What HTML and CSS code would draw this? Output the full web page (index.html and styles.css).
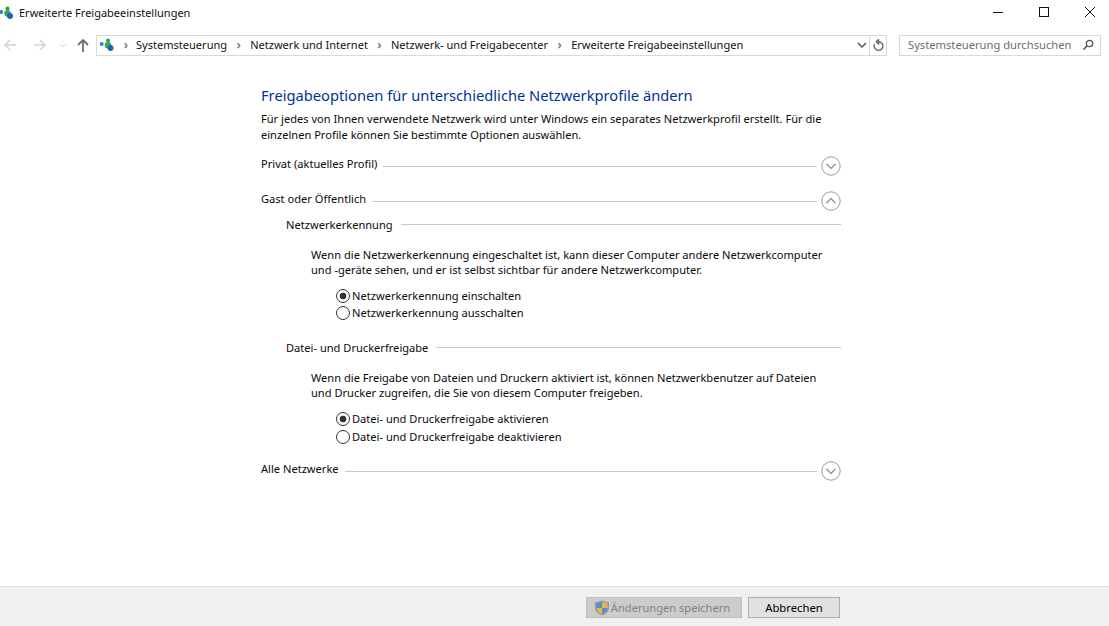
FILE: index.html
```html
<!DOCTYPE html>
<html lang="de">
<head>
<meta charset="utf-8">
<title>Erweiterte Freigabeeinstellungen</title>
<link rel="stylesheet" href="styles.css">
</head>
<body>
<div class="window">
  <header class="titlebar">
    <svg class="net-icon" viewBox="0 0 16 14"><circle cx="2.2" cy="6" r="2" fill="#1a8fc4"/><circle cx="8.500" cy="2.5" r="2" fill="#2f9e44"/><circle cx="8.500" cy="7.200" r="3.200" fill="#3aa655"/><circle cx="11" cy="10" r="3" fill="#1565c0"/></svg>
    <span class="title">Erweiterte Freigabeeinstellungen</span>
    <div class="controls">
      <svg class="ctl" viewBox="0 0 12 12"><path d="M1 6.5h10" stroke="#111" fill="none"/></svg>
      <svg class="ctl" viewBox="0 0 12 12"><rect x="1.5" y="1.5" width="9" height="9" stroke="#111" fill="none"/></svg>
      <svg class="ctl" viewBox="0 0 12 12"><path d="M1 1l10 10M11 1L1 11" stroke="#111" fill="none"/></svg>
    </div>
  </header>
  <nav class="navbar">
    <svg class="nav-btn back" viewBox="0 0 14 14"><path d="M13 7H2M7 2L2 7l5 5" stroke="#d4d4d4" stroke-width="1.6" fill="none"/></svg>
    <svg class="nav-btn fwd" viewBox="0 0 14 14"><path d="M1 7h11M7 2l5 5-5 5" stroke="#d4d4d4" stroke-width="1.6" fill="none"/></svg>
    <svg class="nav-drop" viewBox="0 0 8 5"><path d="M1 1l3 3 3-3" stroke="#d4d4d4" fill="none"/></svg>
    <svg class="nav-btn up" viewBox="0 0 14 14"><path d="M7 14V2M2 7l5-5 5 5" stroke="#6d6d6d" stroke-width="1.8" fill="none"/></svg>
    <div class="address">
      <svg class="net-icon" viewBox="0 0 16 14"><circle cx="2.2" cy="6" r="2" fill="#1a8fc4"/><circle cx="8.500" cy="2.5" r="2" fill="#2f9e44"/><circle cx="8.500" cy="7.200" r="3.200" fill="#3aa655"/><circle cx="11" cy="10" r="3" fill="#1565c0"/></svg>
      <span class="crumb-sep first">›</span><span class="crumb">Systemsteuerung</span>
      <span class="crumb-sep">›</span><span class="crumb">Netzwerk und Internet</span>
      <span class="crumb-sep">›</span><span class="crumb">Netzwerk- und Freigabecenter</span>
      <span class="crumb-sep">›</span><span class="crumb">Erweiterte Freigabeeinstellungen</span>
      <svg class="addr-drop" viewBox="0 0 10 6"><path d="M1 1l4 4 4-4" stroke="#555" stroke-width="1.5" fill="none"/></svg>
      <div class="refresh">
        <svg viewBox="0 0 12 12"><path d="M6 2.5a4 4 0 1 1-3.6 2.3M6 .5v4L4 2.5z" stroke="#666" stroke-width="1.3" fill="none"/></svg>
      </div>
    </div>
    <div class="search">
      <span>Systemsteuerung durchsuchen</span>
      <svg viewBox="0 0 12 12"><circle cx="7.5" cy="4.5" r="3.2" stroke="#555" stroke-width="1.3" fill="none"/><path d="M5 7l-3.5 3.5" stroke="#555" stroke-width="1.6" fill="none"/></svg>
    </div>
  </nav>
  <main class="content">
    <h1>Freigabeoptionen für unterschiedliche Netzwerkprofile ändern</h1>
    <p class="intro">Für jedes von Ihnen verwendete Netzwerk wird unter Windows ein separates Netzwerkprofil erstellt. Für die einzelnen Profile können Sie bestimmte Optionen auswählen.</p>

    <div class="profile privat"><span>Privat (aktuelles Profil)</span><i class="rule"></i>
      <svg class="chev" viewBox="0 0 20 20"><circle cx="10" cy="10" r="9.2" stroke="#9a9a9a" fill="none"/><path d="M5.5 8l4.5 4.5L14.500 8" stroke="#8a8a8a" stroke-width="1.2" fill="none"/></svg></div>
    <div class="profile gast"><span>Gast oder Öffentlich</span><i class="rule"></i>
      <svg class="chev" viewBox="0 0 20 20"><circle cx="10" cy="10" r="9.2" stroke="#9a9a9a" fill="none"/><path d="M5.500 12L10 7.500l4.500 4.500" stroke="#8a8a8a" stroke-width="1.2" fill="none"/></svg></div>

    <section class="group">
      <div class="group-head"><span>Netzwerkerkennung</span><i class="rule"></i></div>
      <p class="desc">Wenn die Netzwerkerkennung eingeschaltet ist, kann dieser Computer andere Netzwerkcomputer und -geräte sehen, und er ist selbst sichtbar für andere Netzwerkcomputer.</p>
      <div class="radios tight">
        <label class="radio on">Netzwerkerkennung einschalten</label>
        <label class="radio">Netzwerkerkennung ausschalten</label>
      </div>
    </section>

    <section class="group second">
      <div class="group-head"><span>Datei- und Druckerfreigabe</span><i class="rule"></i></div>
      <p class="desc">Wenn die Freigabe von Dateien und Druckern aktiviert ist, können Netzwerkbenutzer auf Dateien und Drucker zugreifen, die Sie von diesem Computer freigeben.</p>
      <div class="radios">
        <label class="radio on">Datei- und Druckerfreigabe aktivieren</label>
        <label class="radio">Datei- und Druckerfreigabe deaktivieren</label>
      </div>
    </section>

    <div class="profile alle"><span>Alle Netzwerke</span><i class="rule"></i>
      <svg class="chev" viewBox="0 0 20 20"><circle cx="10" cy="10" r="9.2" stroke="#9a9a9a" fill="none"/><path d="M5.500 8l4.500 4.500L14.500 8" stroke="#8a8a8a" stroke-width="1.2" fill="none"/></svg></div>
  </main>
  <footer class="footer">
    <button class="btn save" disabled>
      <svg viewBox="0 0 16 16"><path d="M8 .5l7 2v5c0 4-3 6.500-7 8-4-1.500-7-4-7-8v-5z" fill="#8c9aa8"/><path d="M8 2l5.500 1.600V8H8z" fill="#e3b94f"/><path d="M8 8h-5.500c.3 3 2.500 5 5.500 6.200z" fill="#e3b94f"/><path d="M8 2L2.500 3.600V8H8z" fill="#5a90c8"/><path d="M8 8h5.500c-.3 3-2.500 5-5.500 6.200z" fill="#5a90c8"/></svg>
      <span>Änderungen speichern</span>
    </button>
    <button class="btn cancel">Abbrechen</button>
  </footer>
</div>
</body>
</html>
```
FILE: styles.css
```css
* { box-sizing: border-box; }
html, body { margin: 0; padding: 0; }
body { width: 1109px; height: 626px; overflow: hidden; background: #fff; color: #0a0a0a;
  font: 11.1px/16px "Noto Sans", "Open Sans", sans-serif; }
.window { width: 1109px; height: 626px; display: flex; flex-direction: column; }

.titlebar { height: 30px; flex: none; display: flex; align-items: center; }
.titlebar .net-icon { width: 16px; height: 14px; margin-left: -1px; margin-top: -5px; }
.title { margin-left: 4px; margin-top: -5px; font-size: 11px; color: #111; }
.controls { margin-left: auto; display: flex; margin-top: -6px; margin-right: 13px; gap: 34px; }
.ctl { width: 12px; height: 12px; display: block; }

.navbar { height: 26px; flex: none; display: flex; align-items: center; position: relative; margin-top: 2px; }
.nav-btn { width: 14px; height: 14px; flex: none; }
.back { margin-left: 3px; }
.fwd { margin-left: 16px; }
.nav-drop { width: 8px; height: 5px; margin-left: 12px; }
.up { margin-left: 9px; }
.address { margin-left: 6px; width: 791px; height: 21px; border: 1px solid #d9d9d9; display: flex; align-items: center; flex: none; }
.address .net-icon { width: 17px; height: 14px; margin-left: 2px; flex: none; }
.crumb-sep { color: #808080; font-size: 12px; font-weight: 700; width: 23px; text-align: center; flex: none; }
.crumb-sep.first { width: 20px; }
.crumb { color: #111; white-space: nowrap; font-size: 11.05px; }
.addr-drop { width: 10px; height: 6px; margin-left: auto; margin-right: 2px; flex: none; }
.refresh { width: 17px; height: 100%; border-left: 1px solid #d9d9d9; display: flex; align-items: center; justify-content: center; flex: none; }
.refresh svg { width: 13px; height: 13px; }
.search { margin-left: 12px; width: 202px; height: 21px; border: 1px solid #d9d9d9; display: flex; align-items: center; justify-content: space-between; padding: 0 6px 0 8px; color: #6d6d6d; font-size: 11.2px; flex: none; }
.search svg { width: 12px; height: 12px; }

.content { flex: 1; width: 580px; margin-left: 261px; position: relative; }
h1 { margin: 27px 0 0; font-size: 14.7px; line-height: 20px; font-weight: 400; color: #003399; }
.intro { margin: 6px 0 0; line-height: 16px; }

.rule { flex: 1; height: 1px; background: #c8c8c8; margin-left: 6px; display: block; }
.profile { display: flex; align-items: center; height: 20px; }
.profile span { position: relative; top: -2px; }
.chev { width: 20px; height: 20px; flex: none; margin-left: 4px; }
.privat { margin-top: 13px; }
.gast { margin-top: 15px; }
.alle { margin-top: 15px; }

.group { margin-left: 25px; margin-top: 6px; }
.group.second { margin-top: 19px; }
.group-head { display: flex; align-items: center; height: 16px; }
.group-head .rule { margin-left: 8px; position: relative; top: -1px; }
.desc { margin: 14px 0 0 25px; line-height: 15px; width: 520px; }
.radios { margin: 10px 0 0 50px; display: flex; flex-direction: column; }
.radio { display: flex; align-items: center; height: 18px; line-height: 18px; }
.tight .radio { height: 17px; }
.radio::before { content: ""; width: 12px; height: 12px; border: 1px solid #333; border-radius: 50%; margin-right: 2px; flex: none; background: #fff; }
.radio.on::before { background: radial-gradient(circle, #333 0, #333 3px, #fff 3.700px); }

.footer { height: 40px; flex: none; background: #f0f0f0; border-top: 1px solid #dfdfdf; display: flex; justify-content: flex-end; align-items: flex-start; padding: 10px 269px 0 0; gap: 6px; }
.btn { height: 21px; font: 11.1px/17px "Noto Sans", sans-serif; padding: 0; display: flex; align-items: center; justify-content: center; }
.save { width: 156px; background: #cccccc; border: 1px solid #bfbfbf; color: #838383; padding-right: 4px; }
.save svg { width: 16px; height: 16px; margin-right: 1px; }
.cancel { width: 92px; background: #e1e1e1; border: 1px solid #adadad; color: #000; font-size: 11.3px; }
```
